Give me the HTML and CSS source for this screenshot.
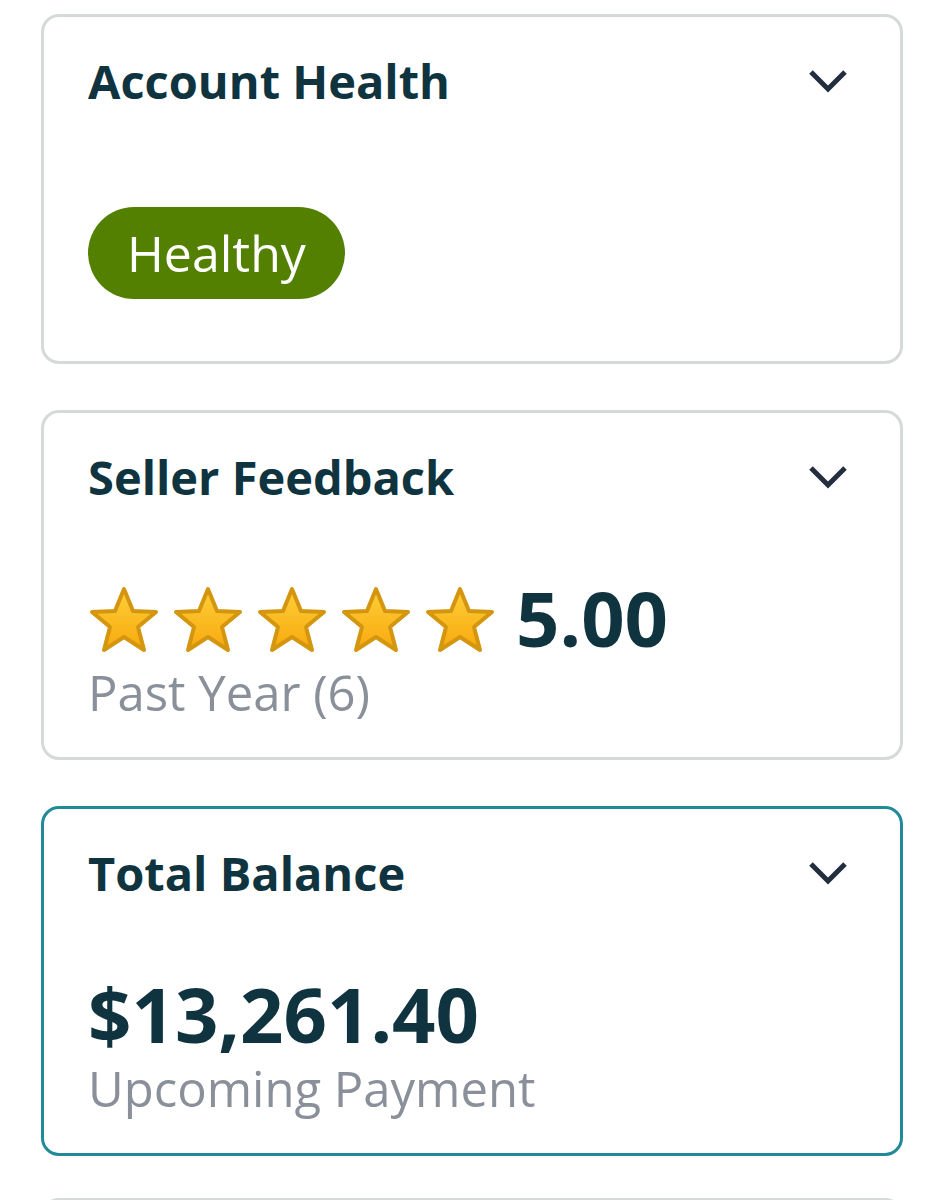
FILE: index.html
```html
<!DOCTYPE html>
<html lang="en">
<head>
    <meta charset="UTF-8">
    <meta name="viewport" content="width=device-width, initial-scale=1.0">
    <title>Seller Dashboard</title>
    <link rel="stylesheet" href="styles.css">
</head>
<body>
    <div class="cards">
        <div class="card">
            <div class="card-head">
                <h2>Account Health</h2>
                <svg class="chevron" viewBox="0 0 40 24"><polyline points="3,3 20,20 37,3"/></svg>
            </div>
            <div class="card-body health">
                <span class="pill">Healthy</span>
            </div>
        </div>

        <div class="card">
            <div class="card-head">
                <h2>Seller Feedback</h2>
                <svg class="chevron" viewBox="0 0 40 24"><polyline points="3,3 20,20 37,3"/></svg>
            </div>
            <div class="card-body">
                <div class="rating">
                    <div class="stars">
                        <svg class="star" viewBox="0 0 72 70"><use href="#star-shape"/></svg>
                        <svg class="star" viewBox="0 0 72 70"><use href="#star-shape"/></svg>
                        <svg class="star" viewBox="0 0 72 70"><use href="#star-shape"/></svg>
                        <svg class="star" viewBox="0 0 72 70"><use href="#star-shape"/></svg>
                        <svg class="star" viewBox="0 0 72 70"><use href="#star-shape"/></svg>
                    </div>
                    <span class="big-value">5.00</span>
                </div>
                <div class="sub">Past Year (6)</div>
            </div>
        </div>

        <div class="card active">
            <div class="card-head">
                <h2>Total Balance</h2>
                <svg class="chevron" viewBox="0 0 40 24"><polyline points="3,3 20,20 37,3"/></svg>
            </div>
            <div class="card-body">
                <div class="big-value">$13,261.40</div>
                <div class="sub">Upcoming Payment</div>
            </div>
        </div>

        <div class="card next"></div>
    </div>

    <svg width="0" height="0" style="position:absolute">
        <defs>
            <linearGradient id="star-fill" x1="0" y1="0" x2="0" y2="1">
                <stop offset="0" stop-color="#ffcf3a"/>
                <stop offset="1" stop-color="#f7a90c"/>
            </linearGradient>
            <polygon id="star-shape" points="36,4 45,26 68,27 50,42 56,65 36,52 16,65 22,42 4,27 27,26"
                     fill="url(#star-fill)" stroke="#d4950f" stroke-width="4" stroke-linejoin="round"/>
        </defs>
    </svg>
</body>
</html>
```

FILE: styles.css
```css
body {
    margin: 0;
    background: #fff;
    font-family: "Open Sans", Arial, sans-serif;
}
.cards {
    padding: 14px 28px 0 41px;
    display: flex;
    flex-direction: column;
    gap: 46px;
}
.card {
    box-sizing: border-box;
    height: 350px;
    border: 3px solid #d5d9d9;
    border-radius: 18px;
    padding: 34px 52px 0 44px;
    display: flex;
    flex-direction: column;
}
.card.active {
    border-color: #22899a;
}
.card.next {
    margin-top: -4px;
}
.card-head {
    display: flex;
    justify-content: space-between;
    align-items: flex-start;
}
.card-head h2 {
    margin: 0;
    font-size: 47px;
    line-height: 60px;
    font-weight: 700;
    color: #0f3440;
}
.chevron {
    width: 40px;
    height: 24px;
    margin-top: 18px;
    fill: none;
    stroke: #232f3e;
    stroke-width: 5;
}
.card-body {
    margin-top: 61px;
}
.card-body.health {
    margin-top: 96px;
}
.pill {
    display: inline-block;
    background: #538000;
    color: #fff;
    font-size: 50px;
    line-height: 92px;
    padding: 0 39px;
    border-radius: 46px;
}
.rating {
    display: flex;
    align-items: center;
    gap: 20px;
}
.stars {
    display: flex;
    gap: 12px;
    margin-top: 4px;
}
.star {
    width: 72px;
    height: 70px;
}
.big-value {
    font-size: 76px;
    line-height: 100px;
    font-weight: 700;
    color: #0f3440;
}
.sub {
    font-size: 49px;
    line-height: 49px;
    color: #8a9099;
}
```
